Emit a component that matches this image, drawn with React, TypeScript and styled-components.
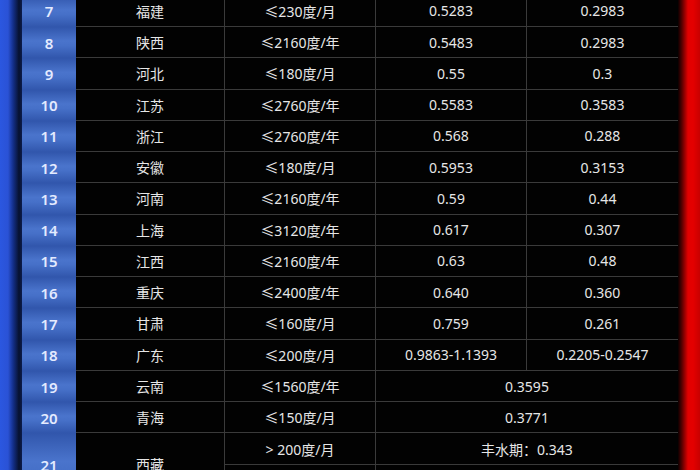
import styled, { createGlobalStyle } from "styled-components";

const GlobalStyle = createGlobalStyle`
  html, body {
    margin: 0;
    padding: 0;
    background: #000;
  }
  body {
    font-family: "Noto Sans", "Noto Sans CJK SC", sans-serif;
    overflow: hidden;
  }
`;

const Page = styled.div`
  display: flex;
  width: 700px;
  height: 470px;
  overflow: hidden;
  background: #020202;
`;

const LeftBar = styled.div`
  flex: 0 0 22px;
  background: linear-gradient(
    to right,
    #2b57e0 0,
    #2a52d6 8px,
    #14308c 13px,
    #07112f 19px,
    #0c1c4c 22px
  );
`;

const RightBar = styled.div`
  flex: 0 0 22px;
  background: linear-gradient(
    to right,
    #0a0000 0,
    #5a0000 4px,
    #e20000 10px,
    #e40000 15px,
    #c80000 22px
  );
`;

const Table = styled.div`
  flex: 1;
  display: grid;
  grid-template-columns: 54px 149px 151px 151px 151px;
  grid-auto-rows: 31.27px;
  margin-top: -4.3px;
  align-self: flex-start;
`;

const Cell = styled.div<{ $span?: number; $rows?: number; $last?: boolean }>`
  grid-column: span ${(p) => p.$span ?? 1};
  grid-row: span ${(p) => p.$rows ?? 1};
  display: flex;
  align-items: center;
  justify-content: center;
  border-bottom: 1px solid #3a3a3a;
  border-right: ${(p) => (p.$last ? "none" : "1px solid #3a3a3a")};
  color: #e6e6e6;
  font-size: 14px;
  white-space: nowrap;
`;

const NumCell = styled.div<{ $rows?: number }>`
  grid-row: span ${(p) => p.$rows ?? 1};
  display: flex;
  align-items: center;
  justify-content: center;
  background: linear-gradient(180deg, #3156ac 0%, #4a74cc 45%, #4670c8 60%, #3156ac 100%);
  color: #e4ebff;
  font-size: 15px;
  font-weight: 600;
`;

type Row = {
  no: number;
  name: string;
  limit: string;
  peak: string;
  valley?: string;
};

const rows: Row[] = [
  { no: 7, name: "福建", limit: "≤230度/月", peak: "0.5283", valley: "0.2983" },
  { no: 8, name: "陕西", limit: "≤2160度/年", peak: "0.5483", valley: "0.2983" },
  { no: 9, name: "河北", limit: "≤180度/月", peak: "0.55", valley: "0.3" },
  { no: 10, name: "江苏", limit: "≤2760度/年", peak: "0.5583", valley: "0.3583" },
  { no: 11, name: "浙江", limit: "≤2760度/年", peak: "0.568", valley: "0.288" },
  { no: 12, name: "安徽", limit: "≤180度/月", peak: "0.5953", valley: "0.3153" },
  { no: 13, name: "河南", limit: "≤2160度/年", peak: "0.59", valley: "0.44" },
  { no: 14, name: "上海", limit: "≤3120度/年", peak: "0.617", valley: "0.307" },
  { no: 15, name: "江西", limit: "≤2160度/年", peak: "0.63", valley: "0.48" },
  { no: 16, name: "重庆", limit: "≤2400度/年", peak: "0.640", valley: "0.360" },
  { no: 17, name: "甘肃", limit: "≤160度/月", peak: "0.759", valley: "0.261" },
  { no: 18, name: "广东", limit: "≤200度/月", peak: "0.9863-1.1393", valley: "0.2205-0.2547" },
  { no: 19, name: "云南", limit: "≤1560度/年", peak: "0.3595" },
  { no: 20, name: "青海", limit: "≤150度/月", peak: "0.3771" },
];

export default function App() {
  return (
    <>
      <GlobalStyle />
      <Page>
        <LeftBar />
        <Table>
          {rows.map((r) => (
            <>
              <NumCell key={`n${r.no}`}>{r.no}</NumCell>
              <Cell key={`p${r.no}`}>{r.name}</Cell>
              <Cell key={`l${r.no}`}>{r.limit}</Cell>
              {r.valley ? (
                <>
                  <Cell key={`a${r.no}`}>{r.peak}</Cell>
                  <Cell key={`b${r.no}`} $last>
                    {r.valley}
                  </Cell>
                </>
              ) : (
                <Cell key={`a${r.no}`} $span={2} $last>
                  {r.peak}
                </Cell>
              )}
            </>
          ))}
          <NumCell $rows={2}>21</NumCell>
          <Cell $rows={2}>西藏</Cell>
          <Cell>&gt; 200度/月</Cell>
          <Cell $span={2} $last>
            丰水期：0.343
          </Cell>
          <Cell>≤200度/月</Cell>
          <Cell $span={2} $last>
            枯水期：0.343
          </Cell>
        </Table>
        <RightBar />
      </Page>
    </>
  );
}
